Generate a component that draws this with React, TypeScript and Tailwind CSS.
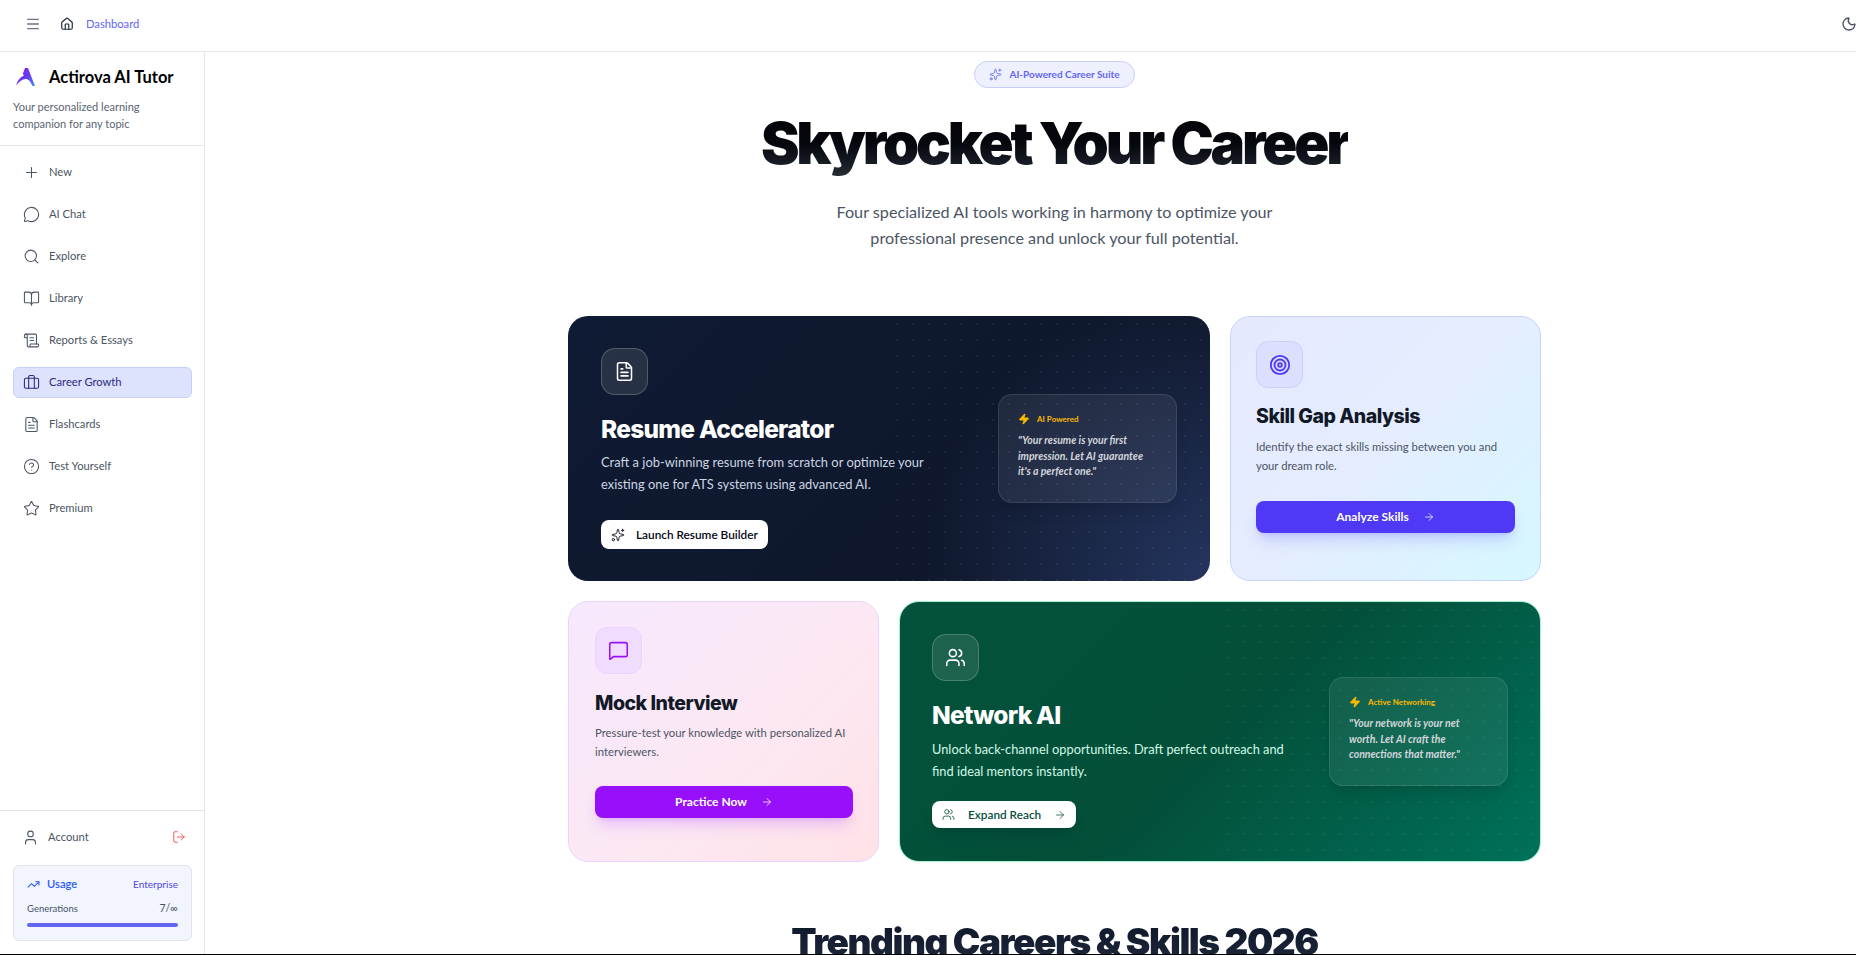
import { Menu, Home, Moon, Plus, MessageCircle, Search, BookOpen, ScrollText, Briefcase, FileText, CircleHelp, Star, User, LogOut, TrendingUp, Sparkles, Zap, Target, MessageSquare, Users, ArrowRight } from 'lucide-react';

const nav = [
    { name: 'New', icon: Plus },
    { name: 'AI Chat', icon: MessageCircle },
    { name: 'Explore', icon: Search },
    { name: 'Library', icon: BookOpen },
    { name: 'Reports & Essays', icon: ScrollText },
    { name: 'Career Growth', icon: Briefcase, active: true },
    { name: 'Flashcards', icon: FileText },
    { name: 'Test Yourself', icon: CircleHelp },
    { name: 'Premium', icon: Star },
];

const body = { fontFamily: 'Lato, sans-serif' };
const head = { fontFamily: 'Inter, sans-serif' };

function Logo() {
    return (
        <svg width="19" height="18" viewBox="0 0 19 18" className="shrink-0">
            <defs>
                <linearGradient id="logoFill" x1="0" y1="0" x2="1" y2="1">
                    <stop offset="0" stopColor="#7c1fe8" />
                    <stop offset="0.55" stopColor="#6a3cf0" />
                    <stop offset="1" stopColor="#3f8cf8" />
                </linearGradient>
            </defs>
            <path d="M9 0 L12 0 L19 18 L16.5 18 C14.5 13.5 12.5 11 9.5 11 C6 11 3 14 0 17.5 C1.5 12.5 4 9 8 7.5 L6.8 6 Z" fill="url(#logoFill)" />
        </svg>
    );
}

function Sidebar() {
    return (
        <aside className="flex w-[205px] shrink-0 flex-col border-r border-[#e2e4ec] bg-white">
            <div className="border-b border-[#e2e4ec] px-[13px] pt-[13px] pb-[13px]">
                <div className="flex items-center gap-[14px] pl-[3px]">
                    <Logo />
                    <span className="text-[16.5px] font-bold leading-[24px] text-black" style={body}>Actirova AI Tutor</span>
                </div>
                <p className="mt-[10px] text-[11px] leading-[16.5px] text-[#5b6472]" style={body}>Your personalized learning<br />companion for any topic</p>
            </div>
            <nav className="flex flex-1 flex-col gap-[11px] pr-[12px] pl-[13px] pt-[11px]">
                {nav.map((item) => (
                    <div key={item.name} className={`flex h-[31px] items-center gap-[9px] rounded-[6px] border pl-[9px] ${item.active ? 'border-[#c3d2fb] bg-[#dde3fd] text-[#2c2a7f]' : 'border-transparent text-[#4b5563]'}`}>
                        <item.icon className="h-[17px] w-[17px] shrink-0" strokeWidth={1.5} />
                        <span className="text-[11.2px]" style={body}>{item.name}</span>
                    </div>
                ))}
            </nav>
            <div className="border-t border-[#e2e4ec] pr-[12px] pl-[13px] pt-[14px] pb-[13px]">
                <div className="flex h-[24px] items-center justify-between pl-[9px] pr-[6px] text-[#4b5563]">
                    <div className="flex items-center gap-[9px]">
                        <User className="h-[17px] w-[17px]" strokeWidth={1.5} />
                        <span className="text-[11.2px]" style={body}>Account</span>
                    </div>
                    <LogOut className="h-[14px] w-[14px] text-[#ef4444]" strokeWidth={1.5} />
                </div>
                <div className="mt-[16px] rounded-[6px] border border-[#e2e4ec] bg-[#f2f4fe] px-[13px] pt-[10px] pb-[13px]" style={body}>
                    <div className="flex items-center justify-between">
                        <div className="flex items-center gap-[7px] text-[#2b5cf6]">
                            <TrendingUp className="h-[13px] w-[13px]" strokeWidth={2} />
                            <span className="text-[11.2px] font-semibold">Usage</span>
                        </div>
                        <span className="text-[10px] text-[#4f46e5]">Enterprise</span>
                    </div>
                    <div className="mt-[8px] flex items-center justify-between text-[9.5px] text-[#475569]">
                        <span>Generations</span>
                        <span className="text-[10.5px]">7/∞</span>
                    </div>
                    <div className="mt-[6px] h-[4px] rounded-full bg-[#6366f1]" />
                </div>
            </div>
        </aside>
    );
}

function Dots() {
    return <div className="pointer-events-none absolute inset-y-0 right-0 w-1/2 bg-[radial-gradient(rgba(255,255,255,0.06)_1px,transparent_1px)] bg-[length:16px_16px]" />;
}

function Quote({ label, text }: { label: string; text: React.ReactNode }) {
    return (
        <div className="relative w-[179px] shrink-0 rounded-[14px] border border-white/10 bg-white/[0.07] px-[19px] pt-[18px] pb-[22px] shadow-lg" style={body}>
            <div className="flex items-center gap-[7px]">
                <Zap className="h-[12px] w-[12px] fill-[#fbb800] text-[#fbb800]" />
                <span className="text-[8px] font-bold text-[#fbb800]">{label}</span>
            </div>
            <p className="mt-[8px] text-[10.5px] leading-[15.5px] font-bold text-[#d1d5db] italic">{text}</p>
        </div>
    );
}

export default function App() {
    return (
        <div className="h-screen w-screen overflow-hidden border-b border-black bg-white" style={body}>
            <div className="flex h-full w-[1905px] flex-col">
                <header className="flex h-[52px] shrink-0 items-center justify-between border-b border-[#e5e7eb] pr-[8px] pb-[3px] pl-[25px]">
                    <div className="flex items-center gap-[19px]">
                        <Menu className="h-[16px] w-[16px] text-[#6b7280]" strokeWidth={2} />
                        <div className="flex items-center gap-[12px]">
                            <Home className="h-[14px] w-[14px] text-[#1f2937]" />
                            <span className="text-[11.2px] text-[#6366f1]">Dashboard</span>
                        </div>
                    </div>
                    <Moon className="mr-[40px] h-[16px] w-[16px] text-[#4b5563]" />
                </header>
                <div className="flex min-h-0 flex-1">
                    <Sidebar />
                    <main className="flex min-w-0 flex-1 flex-col items-center overflow-hidden pt-[9px] pr-[1px]">
                        <div className="flex h-[27px] shrink-0 items-center gap-[7px] rounded-full border border-[#c7cdfb] bg-[#eef0fe] px-[14px] text-[#6366f1]">
                            <Sparkles className="h-[13px] w-[13px]" strokeWidth={1.5} />
                            <span className="text-[10px] font-bold">AI-Powered Career Suite</span>
                        </div>
                        <h1 className="mt-[19px] shrink-0 bg-gradient-to-b from-[#030508] via-[#05070d] to-[#2a2e38] bg-clip-text text-[58px] leading-[72px] font-black tracking-[-0.055em] text-transparent" style={head}>Skyrocket Your Career</h1>
                        <p className="mt-[20px] shrink-0 text-center text-[16.2px] leading-[26px] text-[#4b5563]">Four specialized AI tools working in harmony to optimize your<br />professional presence and unlock your full potential.</p>

                        <div className="mt-[65px] grid w-[973px] shrink-0 grid-cols-3 gap-[20px]">
                            <div className="relative col-span-2 flex h-[265px] justify-between overflow-hidden rounded-[20px] bg-[radial-gradient(circle_at_100%_100%,#25355f_0%,transparent_42%),linear-gradient(135deg,#0f1b34_0%,#0e1527_100%)] pr-[33px] pl-[33px]">
                                <Dots />
                                <div className="relative pt-[32px]">
                                    <div className="flex h-[47px] w-[47px] items-center justify-center rounded-[14px] border border-white/20 bg-white/10">
                                        <FileText className="h-[21px] w-[21px] text-white" strokeWidth={1.75} />
                                    </div>
                                    <h2 className="mt-[18px] text-[24.5px] leading-[32px] font-extrabold tracking-[-0.03em] text-white" style={head}>Resume Accelerator</h2>
                                    <p className="mt-[7px] text-[12.9px] leading-[21.5px] text-[#cbd5e1]">Craft a job-winning resume from scratch or optimize your<br />existing one for ATS systems using advanced AI.</p>
                                    <div className="mt-[25px] flex h-[29px] w-fit items-center gap-[11px] rounded-[8px] bg-white px-[10px] text-[#030712]">
                                        <Sparkles className="h-[14px] w-[14px]" strokeWidth={1.5} />
                                        <span className="text-[11.8px] font-semibold">Launch Resume Builder</span>
                                    </div>
                                </div>
                                <div className="relative flex items-center">
                                    <Quote label="AI Powered" text={<>"Your resume is your first<br />impression. Let AI guarantee<br />it's a perfect one."</>} />
                                </div>
                            </div>

                            <div className="rounded-[20px] border border-[#c7d2fe] bg-[linear-gradient(135deg,#e6e9fe_0%,#e4edfe_50%,#d5f8fe_100%)] px-[25px] pt-[24px]">
                                <div className="flex h-[47px] w-[47px] items-center justify-center rounded-[12px] border border-[#c7d2fe] bg-[#dcdffe]">
                                    <Target className="h-[22px] w-[22px] text-[#4f39f6]" strokeWidth={2} />
                                </div>
                                <h2 className="mt-[14px] text-[19.5px] leading-[28px] font-extrabold tracking-[-0.025em] text-[#111827]" style={head}>Skill Gap Analysis</h2>
                                <p className="mt-[8px] text-[11.3px] leading-[18.5px] text-[#4b5563]">Identify the exact skills missing between you and<br />your dream role.</p>
                                <div className="mt-[26px] flex h-[32px] items-center justify-center gap-[14px] rounded-[8px] bg-[#4f39f6] text-white shadow-lg shadow-indigo-500/25">
                                    <span className="text-[12px] font-bold">Analyze Skills</span>
                                    <ArrowRight className="h-[12px] w-[12px]" strokeWidth={1.5} />
                                </div>
                            </div>

                            <div className="rounded-[20px] border border-[#e9d4ff] bg-[linear-gradient(135deg,#f6e8fe_0%,#fce8f3_55%,#ffe2e6_100%)] px-[26px] pt-[25px]">
                                <div className="flex h-[47px] w-[47px] items-center justify-center rounded-[12px] border border-[#e9d4ff] bg-[#f0dcfe]">
                                    <MessageSquare className="h-[21px] w-[21px] text-[#9810fa]" strokeWidth={1.75} />
                                </div>
                                <h2 className="mt-[15px] text-[19.5px] leading-[28px] font-extrabold tracking-[-0.025em] text-[#111827]" style={head}>Mock Interview</h2>
                                <p className="mt-[6px] text-[11.3px] leading-[19px] text-[#4b5563]">Pressure-test your knowledge with personalized AI<br />interviewers.</p>
                                <div className="mt-[25px] flex h-[32px] w-[258px] items-center justify-center gap-[14px] rounded-[8px] bg-[#9810fa] text-white shadow-lg shadow-purple-500/25">
                                    <span className="text-[12px] font-bold">Practice Now</span>
                                    <ArrowRight className="h-[12px] w-[12px]" strokeWidth={1.5} />
                                </div>
                            </div>

                            <div className="relative col-span-2 flex h-[261px] justify-between overflow-hidden rounded-[20px] border border-[#a4f4cf] bg-[linear-gradient(135deg,#04523c_0%,#034f3a_50%,#007159_100%)] pr-[32px] pl-[32px]">
                                <Dots />
                                <div className="relative pt-[32px]">
                                    <div className="flex h-[47px] w-[47px] items-center justify-center rounded-[14px] border border-white/20 bg-white/10">
                                        <Users className="h-[21px] w-[21px] text-white" strokeWidth={1.75} />
                                    </div>
                                    <h2 className="mt-[18px] text-[24.5px] leading-[32px] font-extrabold tracking-[-0.03em] text-white" style={head}>Network AI</h2>
                                    <p className="mt-[8px] text-[12.8px] leading-[21.5px] text-[#d1fae5]">Unlock back-channel opportunities. Draft perfect outreach and<br />find ideal mentors instantly.</p>
                                    <div className="mt-[19px] flex h-[27px] w-fit items-center gap-[13px] rounded-[8px] bg-white px-[10px] text-[#064e3b] shadow-lg">
                                        <Users className="h-[13px] w-[13px]" strokeWidth={1.5} />
                                        <span className="text-[11.8px] font-semibold">Expand Reach</span>
                                        <ArrowRight className="h-[12px] w-[12px]" strokeWidth={1.5} />
                                    </div>
                                </div>
                                <div className="relative flex items-center">
                                    <Quote label="Active Networking" text={<>"Your network is your net<br />worth. Let AI craft the<br />connections that matter."</>} />
                                </div>
                            </div>
                        </div>

                        <h2 className="mt-[58px] shrink-0 bg-gradient-to-b from-[#0f172a] to-[#1e293b] bg-clip-text text-[37px] leading-[44px] font-black tracking-[-0.04em] text-transparent" style={head}>Trending Careers &amp; Skills 2026</h2>
                    </main>
                </div>
            </div>
        </div>
    );
}
